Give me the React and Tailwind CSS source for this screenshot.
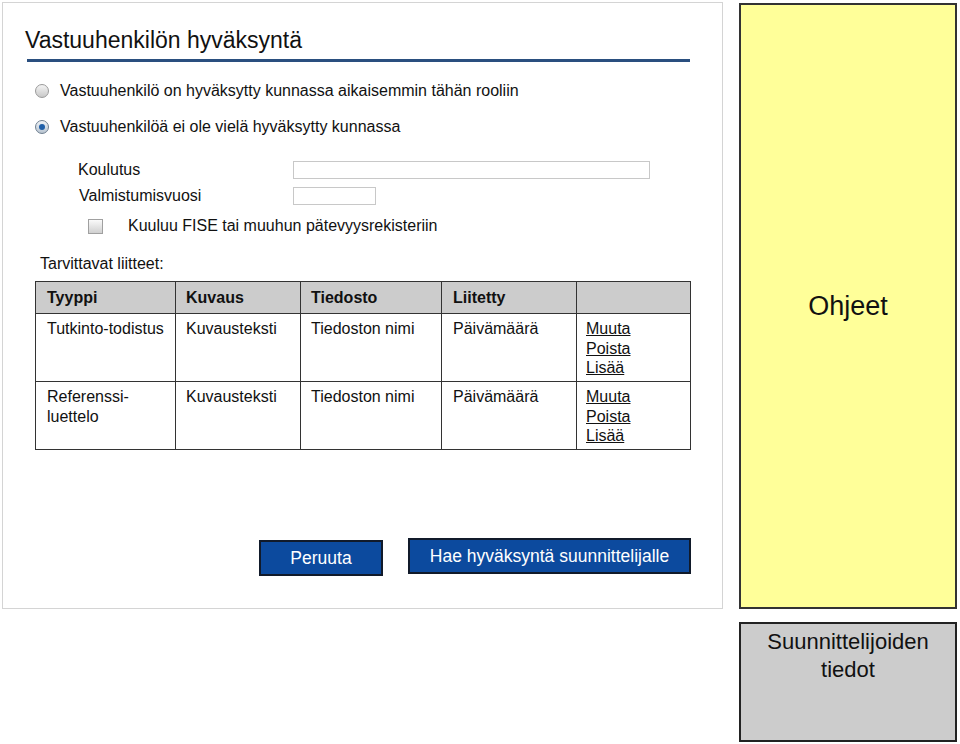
export default function App() {
  const rows = [
    { type: ["Tutkinto-todistus"], desc: "Kuvausteksti", file: "Tiedoston nimi", date: "Päivämäärä" },
    { type: ["Referenssi-", "luettelo"], desc: "Kuvausteksti", file: "Tiedoston nimi", date: "Päivämäärä" },
  ];

  return (
    <div className="flex gap-[16px] p-[2px] bg-white text-black w-[960px] h-[744px]" style={{ fontFamily: '"Liberation Sans", Arial, sans-serif' }}>
      {/* main panel */}
      <div className="w-[721px] h-[607px] border border-[#d4d4d4] bg-white flex flex-col">
        <div className="pl-[22px] pt-[23px] pr-[32px]">
          <h1 className="text-[23px] leading-[28px] text-[#111]">Vastuuhenkilön hyväksyntä</h1>
          <div className="mt-[5px] ml-[2px] h-[3px] bg-[#2a4f7f]" />
        </div>

        {/* radios */}
        <div className="pl-[32px] mt-[19px] flex flex-col gap-[16px] text-[16px] leading-[20px] text-[#111]">
          <label className="flex items-center gap-[11px]">
            <span className="w-[14px] h-[14px] rounded-full border border-[#9a9a9a] bg-gradient-to-b from-[#f4f4f4] to-[#c9c9c9]" />
            <span>Vastuuhenkilö on hyväksytty kunnassa aikaisemmin tähän rooliin</span>
          </label>
          <label className="flex items-center gap-[11px]">
            <span className="w-[14px] h-[14px] rounded-full border border-[#6f7f90] bg-gradient-to-b from-[#f0f4f8] to-[#b8c4d0] flex items-center justify-center">
              <span className="w-[6px] h-[6px] rounded-full bg-[#1f5fa8]" />
            </span>
            <span>Vastuuhenkilöä ei ole vielä hyväksytty kunnassa</span>
          </label>
        </div>

        {/* fields */}
        <div className="mt-[23px] pl-[75px] flex flex-col gap-[7px] text-[16px] text-[#111]">
          <div className="flex items-center h-[19px]">
            <span className="w-[215px]">Koulutus</span>
            <span className="w-[357px] h-[18px] border border-[#c8c8c8] bg-white" />
          </div>
          <div className="flex items-center h-[19px]">
            <span className="w-[215px] pl-[1px]">Valmistumisvuosi</span>
            <span className="w-[83px] h-[18px] border border-[#c8c8c8] bg-white" />
          </div>
        </div>

        <label className="mt-[9px] pl-[85px] flex items-center gap-[25px] text-[16px] text-[#111]">
          <span className="w-[15px] h-[15px] border border-[#a0a0a0] bg-gradient-to-b from-[#fafafa] to-[#d0d0d0]" />
          <span>Kuuluu FISE tai muuhun pätevyysrekisteriin</span>
        </label>

        <div className="mt-[14px] pl-[37px] text-[16px] text-[#111]">Tarvittavat liitteet:</div>

        {/* table */}
        <div className="mt-[5px] pl-[32px]">
          <table className="border-collapse border border-[#333] text-[16px] leading-[19.5px] text-[#111]">
            <thead>
              <tr className="bg-[#cccccc] h-[32px]">
                <th className="w-[140px] border border-[#333] text-left font-bold pl-[11px] align-middle">Tyyppi</th>
                <th className="w-[125px] border border-[#333] text-left font-bold pl-[10px] align-middle">Kuvaus</th>
                <th className="w-[141px] border border-[#333] text-left font-bold pl-[10px] align-middle">Tiedosto</th>
                <th className="w-[135px] border border-[#333] text-left font-bold pl-[11px] align-middle">Liitetty</th>
                <th className="w-[114px] border border-[#333]" />
              </tr>
            </thead>
            <tbody>
              {rows.map((r, i) => (
                <tr key={i} className="h-[68px]">
                  <td className="border border-[#333] align-top pl-[11px] pt-[5px]">
                    {r.type.map((t) => (
                      <div key={t}>{t}</div>
                    ))}
                  </td>
                  <td className="border border-[#333] align-top pl-[10px] pt-[5px]">{r.desc}</td>
                  <td className="border border-[#333] align-top pl-[10px] pt-[5px]">{r.file}</td>
                  <td className="border border-[#333] align-top pl-[11px] pt-[5px]">{r.date}</td>
                  <td className="border border-[#333] align-top pl-[9px] pt-[5px]">
                    <div className="underline">Muuta</div>
                    <div className="underline">Poista</div>
                    <div className="underline">Lisää</div>
                  </td>
                </tr>
              ))}
            </tbody>
          </table>
        </div>

        {/* buttons */}
        <div className="mt-[88px] pl-[256px] flex items-start gap-[25px]">
          <button className="mt-[2px] w-[124px] h-[36px] bg-[#0c4a9e] border-2 border-[#111a2a] text-white text-[17.5px]">Peruuta</button>
          <button className="w-[283px] h-[36px] bg-[#0c4a9e] border-2 border-[#111a2a] text-white text-[17.5px]">Hae hyväksyntä suunnittelijalle</button>
        </div>
      </div>

      {/* right column */}
      <div className="w-[218px] flex flex-col gap-[13px] pt-[1px]">
        <div className="h-[607px] bg-[#ffff99] border-2 border-[#333] flex items-center justify-center text-[27px] text-[#111]">
          Ohjeet
        </div>
        <div className="h-[120px] bg-[#cccccc] border-2 border-[#222] text-center text-[22px] leading-[28px] pt-[4px] text-[#111]">
          Suunnittelijoiden
          <br />
          tiedot
        </div>
      </div>
    </div>
  );
}
